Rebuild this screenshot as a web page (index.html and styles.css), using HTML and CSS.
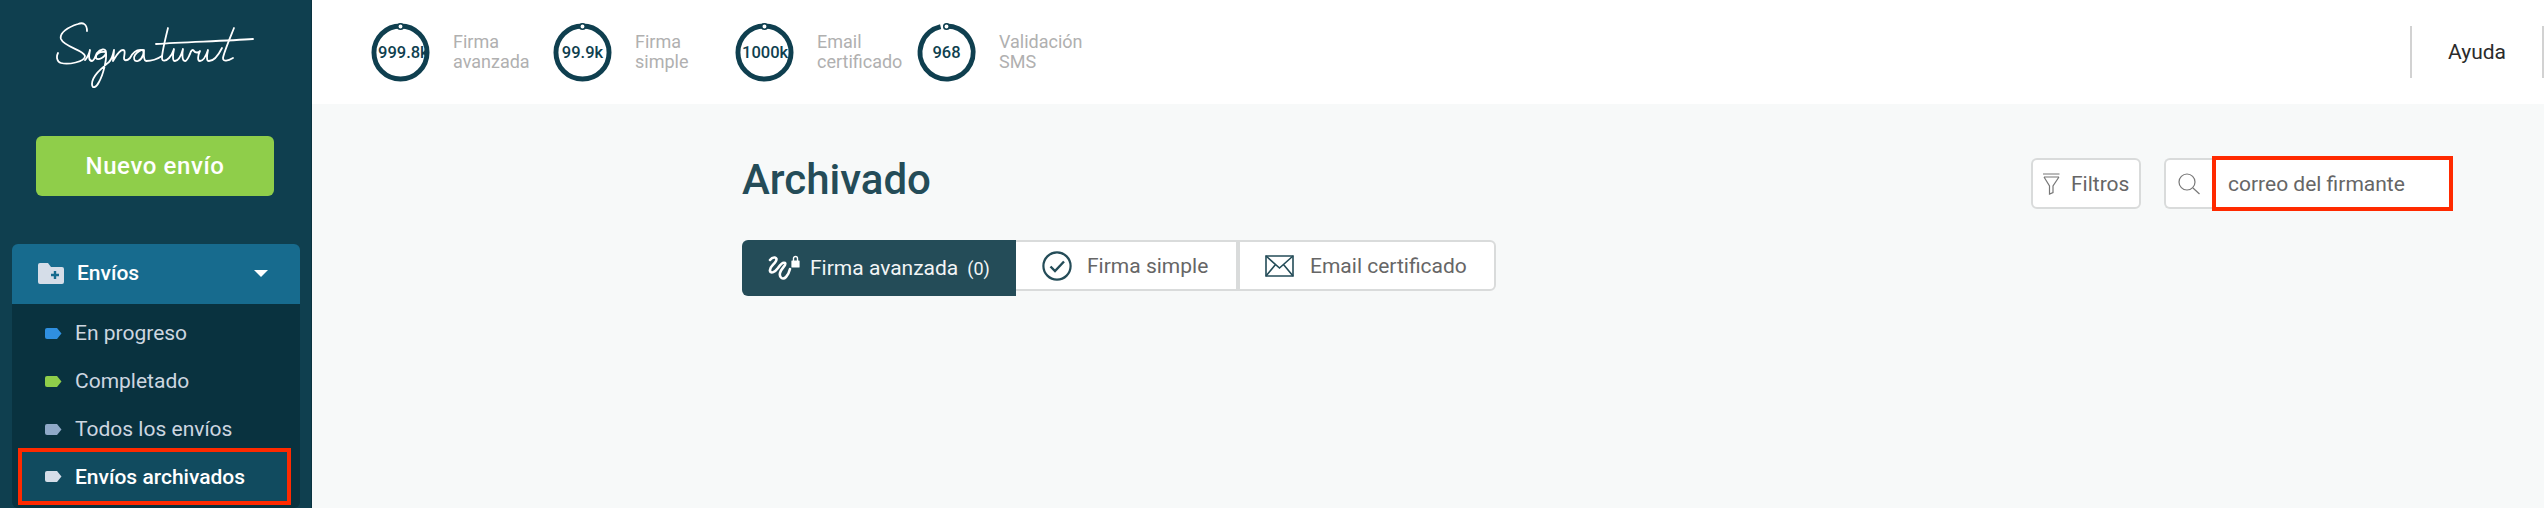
FILE: index.html
```html
<!DOCTYPE html>
<html lang="es">
<head>
<meta charset="utf-8">
<title>Signaturit</title>
<link rel="stylesheet" href="styles.css">
</head>
<body>
<div class="app">
  <aside class="sidebar">
    <div class="logo">
      <svg class="logo-svg" viewBox="0 0 200 70" fill="none" stroke="#fff" stroke-width="1.8" stroke-linecap="round" stroke-linejoin="round" aria-label="Signaturit">
        <path d="M31 11C31 4 27 2 22 4C12 7 3 13 5 19C8 27 28 30 29 36C29 42 12 45 5 43C1 42 0 37 2 33"/>
        <path d="M29 40C31 38 33 34 34 30C33 35 32 41 36 41C38 41 39 37 41 33C44 29 50 28 50 32C50 37 42 41 40 38C39 34 44 31 50 32C51 40 47 55 43 62C40 68 36 69 36 64C36 56 46 48 53 42C55 40 57 35 58 30C58 34 57 38 57 41C60 36 63 30 67 30C70 30 68 36 68 38C68 41 71 41 74 38C76 34 80 29 86 30C89 31 87 39 82 41C78 42 77 38 79 35C81 32 86 29 88 30C88 34 87 40 90 41C94 41 100 40 106 36"/>
        <path d="M112 8C109 20 106 33 106 38C106 42 110 41 113 38C115 36 117 32 118 29C117 34 116 41 119 41C122 41 125 36 127 29C126 34 126 41 129 41C131 41 132 38 134 34C135 30 137 29 138 31C139 33 143 33 144 31C142 35 141 41 144 41C147 41 150 36 152 30C151 35 150 41 153 41C157 41 162 36 166 28"/>
        <path d="M178 8C174 18 168 32 167 38C167 42 172 41 177 38"/>
        <path d="M100 24C130 22 170 21 197 19"/>
      </svg>
    </div>
    <a class="new-btn">Nuevo envío</a>
    <nav class="menu">
      <div class="menu-head">
        <svg class="folder" viewBox="0 0 26 21"><path class="folder-body" d="M2 0H10L13 4H24A2 2 0 0 1 26 6V19A2 2 0 0 1 24 21H2A2 2 0 0 1 0 19V2A2 2 0 0 1 2 0Z"/><path class="folder-plus" d="M17 8V16M13 12H21"/></svg>
        <span class="menu-title">Envíos</span>
        <span class="caret"></span>
      </div>
      <ul class="submenu">
        <li class="sub-item">
          <svg class="tag tag-blue" viewBox="0 0 17 11"><path d="M2 0H12L16.5 5.5L12 11H2A2 2 0 0 1 0 9V2A2 2 0 0 1 2 0Z"/></svg>En progreso
        </li>
        <li class="sub-item">
          <svg class="tag tag-green" viewBox="0 0 17 11"><path d="M2 0H12L16.5 5.5L12 11H2A2 2 0 0 1 0 9V2A2 2 0 0 1 2 0Z"/></svg>Completado
        </li>
        <li class="sub-item">
          <svg class="tag tag-steel" viewBox="0 0 17 11"><path d="M2 0H12L16.5 5.5L12 11H2A2 2 0 0 1 0 9V2A2 2 0 0 1 2 0Z"/></svg>Todos los envíos
        </li>
        <li class="sub-item sub-item-active">
          <svg class="tag tag-pale" viewBox="0 0 17 11"><path d="M2 0H12L16.5 5.5L12 11H2A2 2 0 0 1 0 9V2A2 2 0 0 1 2 0Z"/></svg>Envíos archivados
        </li>
      </ul>
    </nav>
  </aside>
  <div class="content">
    <header class="topbar">
      <div class="stats">
        <div class="stat">
          <div class="gauge">
            <svg class="ring" viewBox="0 0 60 60"><circle class="ring-track" cx="30" cy="30" r="27"/><circle class="ring-knob" cx="30" cy="3.5" r="2.8"/></svg>
            <span class="gauge-value">999.8k</span>
          </div>
          <div class="stat-label">Firma<br>avanzada</div>
        </div>
        <div class="stat">
          <div class="gauge">
            <svg class="ring" viewBox="0 0 60 60"><circle class="ring-track" cx="30" cy="30" r="27"/><circle class="ring-knob" cx="30" cy="3.5" r="2.8"/></svg>
            <span class="gauge-value">99.9k</span>
          </div>
          <div class="stat-label">Firma<br>simple</div>
        </div>
        <div class="stat">
          <div class="gauge">
            <svg class="ring" viewBox="0 0 60 60"><circle class="ring-track" cx="30" cy="30" r="27"/><circle class="ring-knob" cx="30" cy="3.5" r="2.8"/></svg>
            <span class="gauge-value">1000k</span>
          </div>
          <div class="stat-label">Email<br>certificado</div>
        </div>
        <div class="stat">
          <div class="gauge">
            <svg class="ring" viewBox="0 0 60 60"><path class="ring-track" d="M30 3A27 27 0 1 1 24 3.7"/><circle class="ring-knob" cx="30" cy="3.5" r="2.8"/></svg>
            <span class="gauge-value">968</span>
          </div>
          <div class="stat-label">Validación<br>SMS</div>
        </div>
      </div>
      <a class="help">Ayuda</a>
    </header>
    <main class="main">
      <div class="page-head">
        <h1 class="page-title">Archivado</h1>
        <div class="tools">
          <button class="filter-btn">
            <svg class="filter-icon" viewBox="0 0 17 22" fill="none" stroke="#777" stroke-width="1.2"><path d="M0 1H16.5M1 4H16M1 4L6.5 13V21L10 19.5V13L16 4"/></svg>
            Filtros
          </button>
          <div class="search">
            <span class="search-btn">
              <svg class="search-icon" viewBox="0 0 22 22" fill="none" stroke="#777" stroke-width="1.2"><circle cx="9" cy="9" r="8"/><path d="M15 15L21.5 21"/></svg>
            </span>
            <input class="search-input" type="text" value="correo del firmante" aria-label="Buscar">
          </div>
        </div>
      </div>
      <div class="tabs">
        <a class="tab tab-active">
          <svg class="tab-icon-sign" viewBox="0 0 33 26" fill="none" stroke="#fff" stroke-width="2.6" stroke-linecap="round" stroke-linejoin="round">
            <path d="M2 5C5 1 10 2 8 6C6 10 1 12 2 16C3 19 7 17 10 13C12 10 15 7 17 8C19 10 13 13 12 18C11 23 15 25 18 22C20 20 21 18 22 14"/>
            <path d="M24 6H31V12H24Z" fill="#fff" stroke-width="1.2"/>
            <path d="M25.5 5.5V3.5A2 2 0 0 1 29.5 3.5V5.5" stroke-width="1.4"/>
          </svg>
          <span class="tab-label">Firma avanzada</span><span class="tab-count">(0)</span>
        </a>
        <a class="tab tab-simple">
          <svg class="tab-icon-check" viewBox="0 0 30 30" fill="none" stroke="#244c58" stroke-width="2.2"><circle cx="15" cy="15" r="13.6"/><path d="M8.5 15.5L13 20L22 10.5" stroke-width="2.4"/></svg>
          <span class="tab-label">Firma simple</span>
        </a>
        <a class="tab tab-mail">
          <svg class="tab-icon-mail" viewBox="0 0 29 22" fill="none" stroke="#244c58" stroke-width="1.6"><path d="M1 1H28V21H1Z"/><path d="M1 1L14.5 13L28 1M1 21L10.5 9.5M28 21L18.5 9.5"/></svg>
          <span class="tab-label">Email certificado</span>
        </a>
      </div>
    </main>
  </div>
</div>
</body>
</html>
```
FILE: styles.css
```css
* { box-sizing: border-box; }
html, body { margin: 0; height: 100%; overflow: hidden; }
body { font-family: Roboto, "Liberation Sans", sans-serif; background: #f7f9f9; }
ul { list-style: none; margin: 0; padding: 0; }

.app { display: flex; height: 508px; }

.sidebar {
  width: 312px;
  flex: none;
  background: #0f3f4f;
  border-right: 1px solid #0a3340;
  padding: 0 11px 0 12px;
  display: flex;
  flex-direction: column;
}
.logo { height: 136px; padding: 20px 0 0 44px; }
.logo-svg { display: block; width: 200px; height: 70px; }

.new-btn {
  display: flex;
  align-items: center;
  justify-content: center;
  width: 238px;
  height: 60px;
  margin-left: 24px;
  background: #8fce4a;
  color: #fff;
  border-radius: 6px;
  font-size: 24px;
  font-weight: 500;
  letter-spacing: 0.6px;
}

.menu { margin-top: 48px; }
.menu-head {
  display: flex;
  align-items: center;
  height: 60px;
  padding: 0 32px 2px 26px;
  background: #176b8e;
  border-radius: 6px 6px 0 0;
  color: #fff;
  font-size: 21px;
  font-weight: 500;
}
.folder { width: 26px; height: 21px; flex: none; }
.folder-body { fill: #d5dde8; }
.folder-plus { fill: none; stroke: #176b8e; stroke-width: 2.4; }
.menu-title { margin-left: 13px; flex: 1; }
.caret {
  width: 0;
  height: 0;
  border-left: 7px solid transparent;
  border-right: 7px solid transparent;
  border-top: 7px solid #fff;
}

.submenu {
  height: 204px;
  background: #09323f;
  border-radius: 0 0 6px 6px;
  padding: 5px 0 0 6px;
}
.sub-item {
  display: flex;
  align-items: center;
  height: 48px;
  padding-left: 27px;
  color: #cdd6e0;
  font-size: 21px;
}
.sub-item-active {
  width: 273px;
  height: 57px;
  padding-left: 23px;
  background: #114b5f;
  border: 4px solid #ff2a00;
  color: #fff;
  font-weight: 500;
  margin-top: -5px;
}
.tag { width: 17px; height: 11px; flex: none; margin-right: 13px; }
.tag-blue { fill: #2f8fe0; }
.tag-green { fill: #8fce4a; }
.tag-steel { fill: #8fa9c8; }
.tag-pale { fill: #d5dde8; }

.content { flex: 1; min-width: 0; display: flex; flex-direction: column; }

.topbar {
  height: 104px;
  flex: none;
  background: #fff;
  display: flex;
  align-items: center;
  justify-content: space-between;
  padding-left: 59px;
}
.stats { display: flex; }
.stat { width: 182px; display: flex; align-items: center; }
.gauge { position: relative; width: 59px; height: 59px; flex: none; }
.ring { position: absolute; inset: 0; width: 59px; height: 59px; overflow: visible; }
.ring-track { fill: none; stroke: #0f3f4f; stroke-width: 5; }
.ring-knob { fill: #fff; stroke: #0f3f4f; stroke-width: 1.6; }
.gauge-value {
  position: absolute;
  left: 7px;
  top: 0;
  width: 45px;
  line-height: 59px;
  text-align: center;
  white-space: nowrap;
  color: #0f3f4f;
  font-size: 16.5px;
  font-weight: 500;
}
.stat-label {
  margin-left: 23px;
  color: #b0b0b0;
  font-size: 18px;
  line-height: 20px;
}
.help {
  display: flex;
  align-items: center;
  justify-content: center;
  width: 134px;
  height: 52px;
  border-left: 2px solid #d2d2d2;
  border-right: 2px solid #d2d2d2;
  color: #2b2b2b;
  font-size: 21px;
}

.main { flex: 1; padding: 50px 91px 0 430px; }
.page-head { display: flex; justify-content: space-between; height: 86px; }
.page-title {
  margin: 0;
  color: #244c58;
  font-size: 42px;
  line-height: 52px;
  font-weight: 500;
}
.tools { display: flex; align-items: flex-start; padding-top: 2px; }
.filter-btn {
  display: flex;
  align-items: center;
  width: 110px;
  height: 51px;
  margin: 2px 23px 0 0;
  padding: 0 0 0 10px;
  background: #fff;
  border: 2px solid #d9dbdb;
  border-radius: 6px;
  color: #666;
  font-family: inherit;
  font-size: 21px;
}
.filter-icon { width: 17px; height: 22px; margin-right: 11px; }
.search { display: flex; align-items: flex-start; }
.search-btn {
  display: flex;
  align-items: center;
  justify-content: center;
  width: 48px;
  height: 51px;
  margin-top: 2px;
  background: #fff;
  border: 2px solid #d9dbdb;
  border-right: 0;
  border-radius: 6px 0 0 6px;
}
.search-icon { width: 22px; height: 22px; }
.search-input {
  width: 241px;
  height: 55px;
  padding: 0 0 0 12px;
  background: #fff;
  border: 4px solid #ff2a00;
  border-radius: 0;
  color: #666;
  font-family: inherit;
  font-size: 21px;
  outline: none;
}

.tabs { display: flex; align-items: flex-start; }
.tab {
  display: flex;
  align-items: center;
  height: 51px;
  background: #fff;
  border: 2px solid #d9dbdb;
  color: #666;
  font-size: 21px;
}
.tab-active {
  width: 274px;
  height: 56px;
  padding-left: 26px;
  background: #244c58;
  border: 0;
  border-radius: 6px 0 0 6px;
  color: #f2f5f6;
}
.tab-simple { width: 220px; padding-left: 26px; border-right: 0; border-left: 0; }
.tab-mail { width: 260px; padding-left: 25px; border-left-width: 4px; border-radius: 0 6px 6px 0; }
.tab-icon-sign { width: 33px; height: 26px; margin-right: 9px; flex: none; }
.tab-icon-check { width: 30px; height: 30px; margin-right: 15px; flex: none; }
.tab-icon-mail { width: 29px; height: 22px; margin-right: 16px; flex: none; }
.tab-count { margin-left: 9px; font-size: 18px; }
```
